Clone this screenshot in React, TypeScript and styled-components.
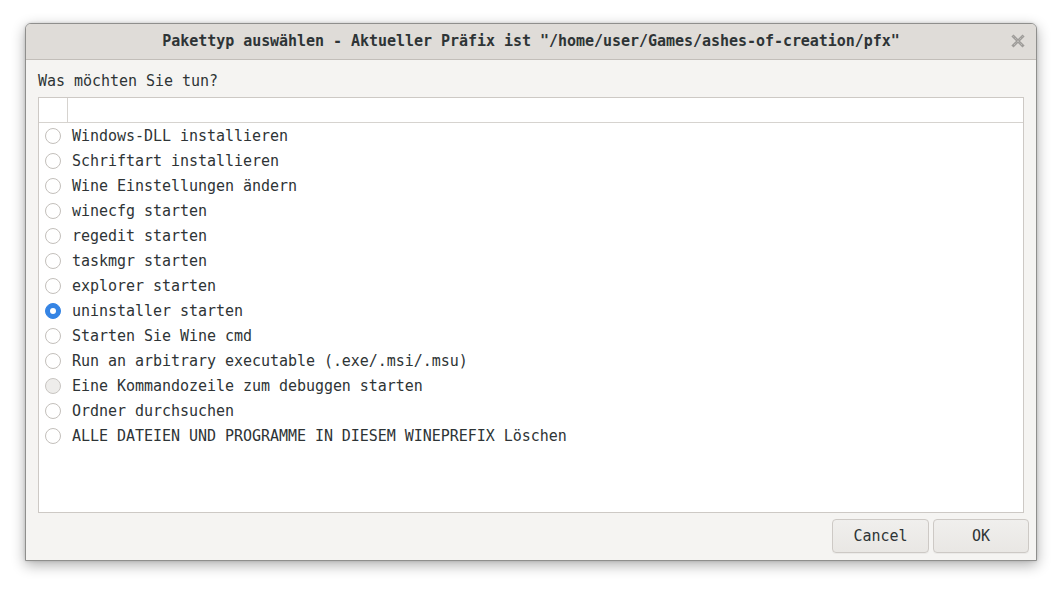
import React, { useState } from "react";
import styled, { createGlobalStyle } from "styled-components";

const Global = createGlobalStyle`
  html, body { margin: 0; padding: 0; background: #ffffff; }
  body { font-family: "DejaVu Sans Mono", monospace; letter-spacing: -0.035px; }
`;

const Page = styled.div`
  width: 1062px;
  height: 589px;
  padding: 23px 0 0 25px;
  box-sizing: border-box;
`;

const Window = styled.div`
  width: 1012px;
  height: 538px;
  box-sizing: border-box;
  border: 1px solid #8f8f8d;
  border-radius: 6px 6px 0 0;
  background: #f5f4f2;
  box-shadow: 0 4px 14px rgba(0, 0, 0, 0.32), 0 0 3px rgba(0, 0, 0, 0.15);
  display: flex;
  flex-direction: column;
  overflow: hidden;
`;

const TitleBar = styled.div`
  height: 35px;
  flex: none;
  background: #dfdcd8;
  border-bottom: 1px solid #c2beb9;
  display: flex;
  align-items: center;
  justify-content: center;
  position: relative;
  font-family: "DejaVu Sans Mono", monospace;
  font-weight: bold;
  font-size: 15px;
  line-height: 33px;
  color: #2e3436;
`;

const CloseButton = styled.div`
  position: absolute;
  right: 11px;
  top: 10px;
  width: 14px;
  height: 14px;
  display: flex;
  align-items: center;
  justify-content: center;
`;

const Content = styled.div`
  flex: 1;
  display: flex;
  flex-direction: column;
  padding: 12px 12px 7px 12px;
  min-height: 0;
`;

const Label = styled.div`
  height: 18px;
  line-height: 18px;
  font-size: 15px;
  color: #2e3436;
  margin-bottom: 7px;
`;

const List = styled.div`
  flex: 1;
  background: #ffffff;
  border: 1px solid #cdc9c5;
  display: flex;
  flex-direction: column;
  min-height: 0;
`;

const Header = styled.div`
  height: 24px;
  flex: none;
  border-bottom: 1px solid #d6d3cf;
  display: flex;
`;

const HeaderCell = styled.div<{ $w?: number }>`
  width: ${(p) => (p.$w ? `${p.$w}px` : "auto")};
  flex: ${(p) => (p.$w ? "none" : "1")};
  border-right: ${(p) => (p.$w ? "1px solid #d6d3cf" : "none")};
`;

const Row = styled.label`
  height: 25px;
  display: flex;
  align-items: center;
  padding-left: 6px;
  gap: 11px;
  font-size: 15px;
  color: #2e3436;
  cursor: default;
  white-space: pre;
`;

const Radio = styled.span<{ $checked?: boolean; $disabled?: boolean }>`
  width: 16px;
  height: 16px;
  box-sizing: border-box;
  border-radius: 50%;
  flex: none;
  border: 1px solid ${(p) => (p.$checked ? "#3584e4" : p.$disabled ? "#c8c5c1" : "#c3bfbb")};
  background: ${(p) => (p.$checked ? "#3584e4" : p.$disabled ? "#eeedeb" : "#ffffff")};
  display: flex;
  align-items: center;
  justify-content: center;
  &::after {
    content: "";
    width: 6px;
    height: 6px;
    border-radius: 50%;
    background: #ffffff;
    display: ${(p) => (p.$checked ? "block" : "none")};
  }
`;

const ButtonRow = styled.div`
  flex: none;
  display: flex;
  justify-content: flex-end;
  gap: 4px;
  margin-top: 6px;
  margin-right: -5px;
`;

const Button = styled.button<{ $w: number }>`
  width: ${(p) => p.$w}px;
  height: 34px;
  border: 1px solid #cdc9c5;
  border-radius: 4px;
  background: linear-gradient(#f0efed, #e9e7e4);
  box-shadow: 0 1px 0 rgba(0, 0, 0, 0.04);
  font-family: "DejaVu Sans Mono", monospace;
  font-size: 15px;
  color: #2e3436;
  padding: 0;
`;

const items = [
  "Windows-DLL installieren",
  "Schriftart installieren",
  "Wine Einstellungen ändern",
  "winecfg starten",
  "regedit starten",
  "taskmgr starten",
  "explorer starten",
  "uninstaller starten",
  "Starten Sie Wine cmd",
  "Run an arbitrary executable (.exe/.msi/.msu)",
  "Eine Kommandozeile zum debuggen starten",
  "Ordner durchsuchen",
  "ALLE DATEIEN UND PROGRAMME IN DIESEM WINEPREFIX Löschen",
];

export default function App() {
  const [selected, setSelected] = useState(7);
  return (
    <Page>
      <Global />
      <Window>
        <TitleBar>
          Pakettyp auswählen - Aktueller Präfix ist "/home/user/Games/ashes-of-creation/pfx"
          <CloseButton>
            <svg width="14" height="14" viewBox="0 0 14 14">
              <path d="M2.5 2.5 L11.5 11.5 M11.5 2.5 L2.5 11.5" stroke="#9e9c99" strokeWidth="3" strokeLinecap="square" />
              <path d="M2.5 2.5 L11.5 11.5 M11.5 2.5 L2.5 11.5" stroke="#cfcdca" strokeWidth="0.9" strokeDasharray="1 1.2" />
            </svg>
          </CloseButton>
        </TitleBar>
        <Content>
          <Label>Was möchten Sie tun?</Label>
          <List>
            <Header>
              <HeaderCell $w={28} />
              <HeaderCell />
            </Header>
            {items.map((t, i) => (
              <Row key={i} onClick={() => setSelected(i)}>
                <Radio $checked={selected === i} $disabled={i === 10} />
                {t}
              </Row>
            ))}
          </List>
          <ButtonRow>
            <Button $w={97}>Cancel</Button>
            <Button $w={96}>OK</Button>
          </ButtonRow>
        </Content>
      </Window>
    </Page>
  );
}
